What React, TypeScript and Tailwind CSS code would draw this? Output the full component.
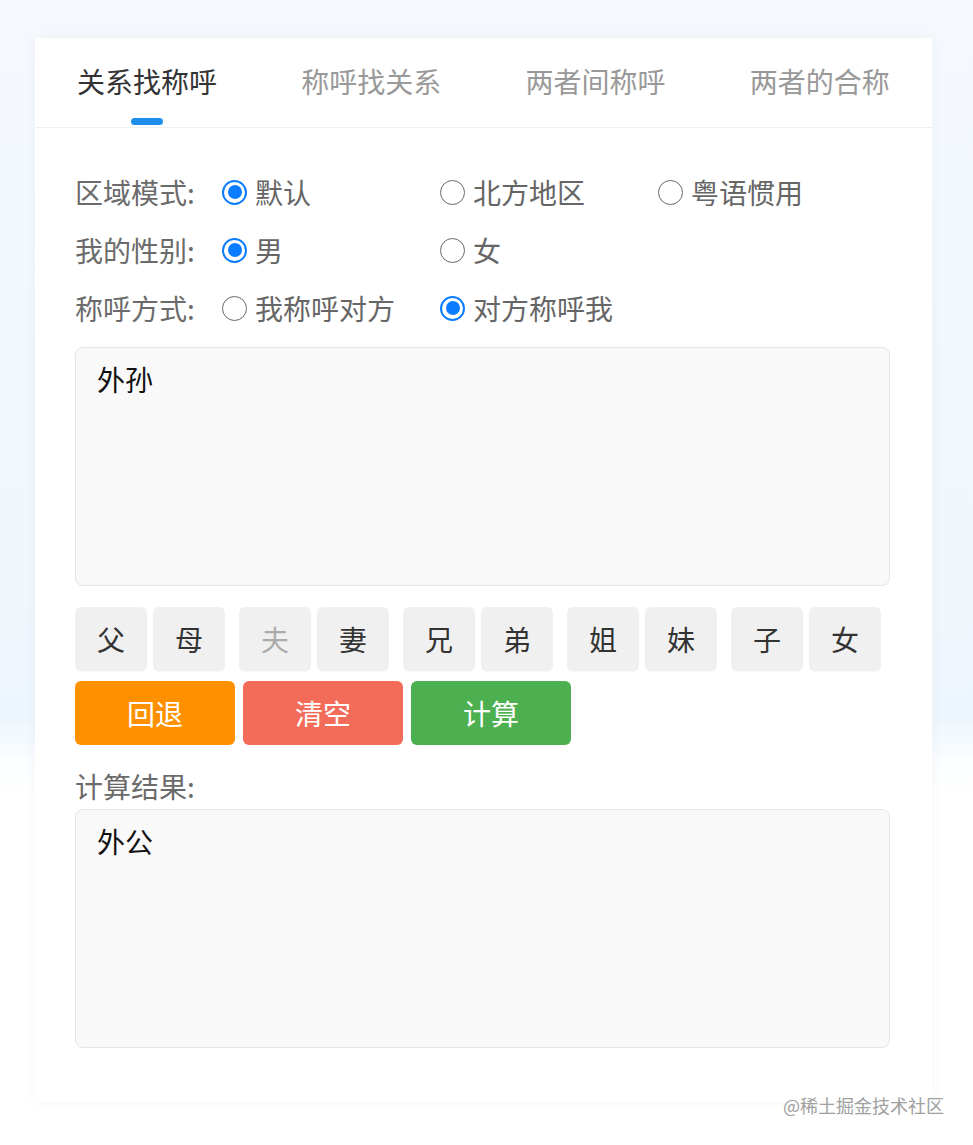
import React from "react";

const font = { fontFamily: '"Noto Sans CJK SC", "Noto Sans", sans-serif' };

function Radio({ checked, label }: { checked: boolean; label: string }) {
  return (
    <div className="flex w-[218px] items-center gap-[8px]">
      {checked ? (
        <span className="flex h-[25px] w-[25px] items-center justify-center rounded-full border-[2.5px] border-[#0a7cff] bg-white">
          <span className="h-[14px] w-[14px] rounded-full bg-[#0a7cff]" />
        </span>
      ) : (
        <span className="h-[25px] w-[25px] rounded-full border-[1.5px] border-[#6a6a6a] bg-white" />
      )}
      <span className="text-[28px] leading-none text-[#666]">{label}</span>
    </div>
  );
}

function Row({ label, options }: { label: string; options: [string, boolean][] }) {
  return (
    <div className="flex h-[58px] items-center">
      <div className="w-[147px] text-[28px] leading-none text-[#6b6b6b]">{label}</div>
      {options.map(([t, c]) => (
        <Radio key={t} label={t} checked={c} />
      ))}
    </div>
  );
}

function Key({ t, disabled }: { t: string; disabled?: boolean }) {
  return (
    <div
      className={`flex h-[64px] w-[72px] items-center justify-center rounded-[6px] bg-[#f0f0f0] text-[28px] shadow-[0_1px_1px_rgba(0,0,0,0.03)] ${
        disabled ? "text-[#aaa]" : "text-[#333]"
      }`}
    >
      {t}
    </div>
  );
}

export default function App() {
  const tabs = ["关系找称呼", "称呼找关系", "两者间称呼", "两者的合称"];
  const pairs = [
    ["父", "母"],
    ["夫", "妻"],
    ["兄", "弟"],
    ["姐", "妹"],
    ["子", "女"],
  ];
  return (
    <div
      style={font}
      className="relative min-h-[1145px] w-full bg-[linear-gradient(180deg,#f5f9fd_0px,#eef6fd_720px,#fbfdff_760px,#ffffff_800px)] pt-[38px]"
    >
      <div className="mx-[35px] w-[897px] bg-white shadow-[0_0_12px_rgba(0,40,90,0.04)]">
        <div className="flex h-[90px] border-b border-[#f0f0f0]">
          {tabs.map((t, i) => (
            <div key={t} className="relative flex flex-1 flex-col items-center pt-[23px]">
              <span className={`text-[28px] leading-[40px] ${i === 0 ? "text-[#333]" : "text-[#999]"}`}>{t}</span>
              {i === 0 && <span className="mt-[17px] h-[7px] w-[32px] rounded-full bg-[#1f8fec]" />}
            </div>
          ))}
        </div>
        <div className="px-[40px] pb-[54px] pt-[35px]">
          <Row label="区域模式:" options={[["默认", true], ["北方地区", false], ["粤语惯用", false]]} />
          <Row label="我的性别:" options={[["男", true], ["女", false]]} />
          <Row label="称呼方式:" options={[["我称呼对方", false], ["对方称呼我", true]]} />
          <div className="mt-[10px] h-[239px] w-[815px] rounded-[8px] border border-[#e6e6e6] bg-[#f9f9f9] px-[21px] pt-[11px] text-[28px] leading-[40px] text-[#111]">
            外孙
          </div>
          <div className="mt-[21px] flex gap-[14px]">
            {pairs.map(([a, b]) => (
              <div key={a} className="flex gap-[6px]">
                <Key t={a} disabled={a === "夫"} />
                <Key t={b} />
              </div>
            ))}
          </div>
          <div className="mt-[10px] flex gap-[8px]">
            <button className="h-[64px] w-[160px] rounded-[6px] bg-[#ff9100] text-[28px] text-white">回退</button>
            <button className="h-[64px] w-[160px] rounded-[6px] bg-[#f36c5a] text-[28px] text-white">清空</button>
            <button className="h-[64px] w-[160px] rounded-[6px] bg-[#4caf50] text-[28px] text-white">计算</button>
          </div>
          <div className="mt-[27px] h-[28px] text-[28px] leading-[28px] text-[#6b6b6b]">计算结果:</div>
          <div className="mt-[9px] h-[239px] w-[815px] rounded-[8px] border border-[#e6e6e6] bg-[#f9f9f9] px-[21px] pt-[11px] text-[28px] leading-[40px] text-[#111]">
            外公
          </div>
        </div>
      </div>
      <div className="absolute left-[783px] top-[1093px] text-[18px] leading-[24px] text-[#a0a0a0] [text-shadow:0_0_2px_#fff]">
        @稀土掘金技术社区
      </div>
    </div>
  );
}
